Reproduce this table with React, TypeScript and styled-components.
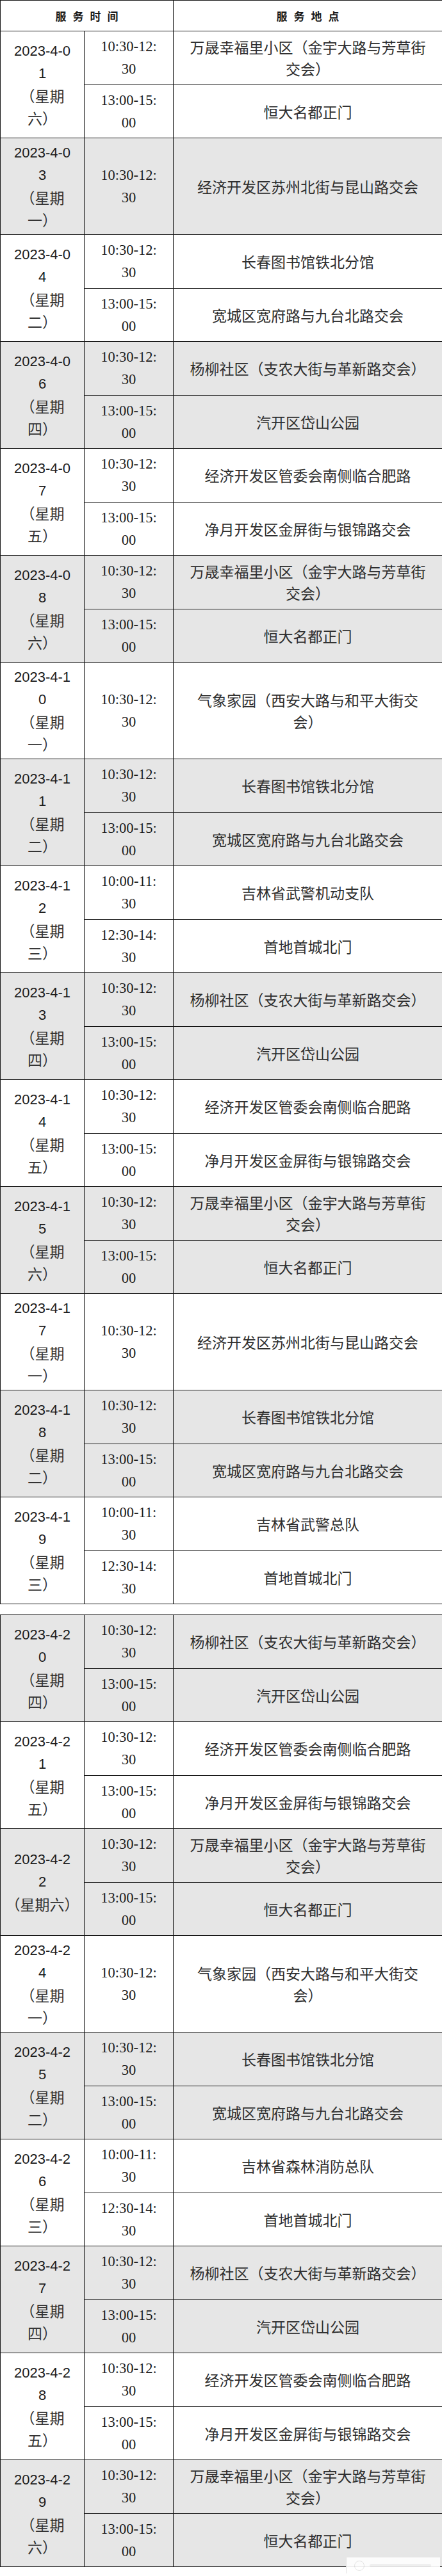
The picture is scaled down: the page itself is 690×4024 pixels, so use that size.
import React from "react";
import styled, { createGlobalStyle } from "styled-components";

const GlobalStyle = createGlobalStyle`
  html, body { margin: 0; padding: 0; background: #ffffff; }
  body { width: 690px; }
`;

type Slot = { time: [string, string]; place: string[] };
type Group = { date: string[]; gray: boolean; slots: Slot[] };

const WANSHENG = ["万晟幸福里小区（金宇大路与芳草街", "交会）"];
const HENGDA = ["恒大名都正门"];
const SUZHOU = ["经济开发区苏州北街与昆山路交会"];
const LIB = ["长春图书馆铁北分馆"];
const KUANCHENG = ["宽城区宽府路与九台北路交会"];
const YANGLIU = ["杨柳社区（支农大街与革新路交会）"];
const DAISHAN = ["汽开区岱山公园"];
const GUANWEI = ["经济开发区管委会南侧临合肥路"];
const JINGYUE = ["净月开发区金屏街与银锦路交会"];
const QIXIANG = ["气象家园（西安大路与和平大街交", "会）"];
const SHOUDI = ["首地首城北门"];

const AM: [string, string] = ["10:30-12:", "30"];
const PM: [string, string] = ["13:00-15:", "00"];
const AM2: [string, string] = ["10:00-11:", "30"];
const PM2: [string, string] = ["12:30-14:", "30"];

const d = (a: string, b: string, w: string): string[] => [a, b, "（星期", w + "）"];

const table1: Group[] = [
  { date: d("2023-4-0", "1", "六"), gray: false, slots: [{ time: AM, place: WANSHENG }, { time: PM, place: HENGDA }] },
  { date: d("2023-4-0", "3", "一"), gray: true, slots: [{ time: AM, place: SUZHOU }] },
  { date: d("2023-4-0", "4", "二"), gray: false, slots: [{ time: AM, place: LIB }, { time: PM, place: KUANCHENG }] },
  { date: d("2023-4-0", "6", "四"), gray: true, slots: [{ time: AM, place: YANGLIU }, { time: PM, place: DAISHAN }] },
  { date: d("2023-4-0", "7", "五"), gray: false, slots: [{ time: AM, place: GUANWEI }, { time: PM, place: JINGYUE }] },
  { date: d("2023-4-0", "8", "六"), gray: true, slots: [{ time: AM, place: WANSHENG }, { time: PM, place: HENGDA }] },
  { date: d("2023-4-1", "0", "一"), gray: false, slots: [{ time: AM, place: QIXIANG }] },
  { date: d("2023-4-1", "1", "二"), gray: true, slots: [{ time: AM, place: LIB }, { time: PM, place: KUANCHENG }] },
  { date: d("2023-4-1", "2", "三"), gray: false, slots: [{ time: AM2, place: ["吉林省武警机动支队"] }, { time: PM2, place: SHOUDI }] },
  { date: d("2023-4-1", "3", "四"), gray: true, slots: [{ time: AM, place: YANGLIU }, { time: PM, place: DAISHAN }] },
  { date: d("2023-4-1", "4", "五"), gray: false, slots: [{ time: AM, place: GUANWEI }, { time: PM, place: JINGYUE }] },
  { date: d("2023-4-1", "5", "六"), gray: true, slots: [{ time: AM, place: WANSHENG }, { time: PM, place: HENGDA }] },
  { date: d("2023-4-1", "7", "一"), gray: false, slots: [{ time: AM, place: SUZHOU }] },
  { date: d("2023-4-1", "8", "二"), gray: true, slots: [{ time: AM, place: LIB }, { time: PM, place: KUANCHENG }] },
  { date: d("2023-4-1", "9", "三"), gray: false, slots: [{ time: AM2, place: ["吉林省武警总队"] }, { time: PM2, place: SHOUDI }] },
];

const table2: Group[] = [
  { date: d("2023-4-2", "0", "四"), gray: true, slots: [{ time: AM, place: YANGLIU }, { time: PM, place: DAISHAN }] },
  { date: d("2023-4-2", "1", "五"), gray: false, slots: [{ time: AM, place: GUANWEI }, { time: PM, place: JINGYUE }] },
  { date: ["2023-4-2", "2", "（星期六）"], gray: true, slots: [{ time: AM, place: WANSHENG }, { time: PM, place: HENGDA }] },
  { date: d("2023-4-2", "4", "一"), gray: false, slots: [{ time: AM, place: QIXIANG }] },
  { date: d("2023-4-2", "5", "二"), gray: true, slots: [{ time: AM, place: LIB }, { time: PM, place: KUANCHENG }] },
  { date: d("2023-4-2", "6", "三"), gray: false, slots: [{ time: AM2, place: ["吉林省森林消防总队"] }, { time: PM2, place: SHOUDI }] },
  { date: d("2023-4-2", "7", "四"), gray: true, slots: [{ time: AM, place: YANGLIU }, { time: PM, place: DAISHAN }] },
  { date: d("2023-4-2", "8", "五"), gray: false, slots: [{ time: AM, place: GUANWEI }, { time: PM, place: JINGYUE }] },
  { date: d("2023-4-2", "9", "六"), gray: true, slots: [{ time: AM, place: WANSHENG }, { time: PM, place: HENGDA }] },
];

const Page = styled.div`
  position: relative;
  width: 690px;
  height: 4024px;
  background: #ffffff;
  display: flex;
  flex-direction: column;
  gap: 16px;
`;

const Table = styled.table`
  width: 690px;
  border-collapse: collapse;
  table-layout: fixed;
`;

const Row = styled.tr<{ $gray?: boolean }>`
  background: ${(p) => (p.$gray ? "#e6e6e6" : "#ffffff")};
`;

const HeaderCell = styled.th`
  height: 47px;
  padding: 0 0 0 10px;
  border: 1px solid #141414;
  font-family: "Noto Sans CJK SC", sans-serif;
  font-weight: 700;
  font-size: 17px;
  letter-spacing: 10px;
  color: #1a1a1a;
  text-align: center;
  vertical-align: middle;
`;

const BaseCell = styled.td`
  border: 1px solid #141414;
  text-align: center;
  vertical-align: middle;
  padding: 6px 0;
`;

const DateCell = styled(BaseCell)`
  padding: 6px 0;
  font-family: "Liberation Sans", "Noto Sans CJK SC", sans-serif;
  font-size: 22px;
  line-height: 34.5px;
  color: #1c1c1c;
`;

const TimeCell = styled(BaseCell)`
  padding: 6px 0 6.5px;
  font-family: "Liberation Serif", "Noto Sans CJK SC", serif;
  font-size: 22.5px;
  line-height: 35px;
  color: #1c1c1c;
`;

const PlaceCell = styled(BaseCell)`
  padding: 6px 0;
  font-family: "Noto Sans CJK SC", sans-serif;
  font-size: 23px;
  line-height: 34px;
  color: #2e2e2e;
`;

const Line = styled.span<{ $cjk?: boolean }>`
  display: block;
  white-space: nowrap;
  ${(p) =>
    p.$cjk
      ? `font-family: "Noto Sans CJK SC", sans-serif; font-size: 23px; color: #333333;`
      : ""}
`;

const Watermark = styled.div`
  position: absolute;
  left: 540px;
  top: 3995px;
  width: 147px;
  height: 25px;
  background: #ffffff;
  border-left: 1px solid #e2e2e2;
  display: flex;
  align-items: center;
  gap: 8px;
  padding-left: 12px;
  box-sizing: border-box;
  opacity: 0.9;
`;

const Ring = styled.div`
  width: 14px;
  height: 14px;
  border-radius: 50%;
  border: 1.5px solid #e4e4e4;
`;

const Smudge = styled.div`
  flex: 1;
  height: 5px;
  margin-right: 14px;
  border-radius: 3px;
  background: #f1f1f1;
`;

const isCjk = (s: string) => /[\u3000-\u9fff\uff00-\uffef]/.test(s);

function GroupRows({ g }: { g: Group }) {
  return (
    <>
      {g.slots.map((s, i) => (
        <Row key={i} $gray={g.gray}>
          {i === 0 && (
            <DateCell rowSpan={g.slots.length}>
              {g.date.map((l, j) => (
                <Line key={j} $cjk={isCjk(l)}>
                  {l}
                </Line>
              ))}
            </DateCell>
          )}
          <TimeCell>
            {s.time.map((l, j) => (
              <Line key={j}>{l}</Line>
            ))}
          </TimeCell>
          <PlaceCell>
            {s.place.map((l, j) => (
              <Line key={j}>{l}</Line>
            ))}
          </PlaceCell>
        </Row>
      ))}
    </>
  );
}

function Cols() {
  return (
    <colgroup>
      <col style={{ width: 131 }} />
      <col style={{ width: 139 }} />
      <col style={{ width: 420 }} />
    </colgroup>
  );
}

export default function App() {
  return (
    <>
      <GlobalStyle />
      <Page>
        <Table>
          <Cols />
          <thead>
            <Row>
              <HeaderCell colSpan={2}>服务时间</HeaderCell>
              <HeaderCell>服务地点</HeaderCell>
            </Row>
          </thead>
          <tbody>
            {table1.map((g, i) => (
              <GroupRows key={i} g={g} />
            ))}
          </tbody>
        </Table>
        <Table>
          <Cols />
          <tbody>
            {table2.map((g, i) => (
              <GroupRows key={i} g={g} />
            ))}
          </tbody>
        </Table>
        <Watermark>
          <Ring />
          <Smudge />
        </Watermark>
      </Page>
    </>
  );
}
